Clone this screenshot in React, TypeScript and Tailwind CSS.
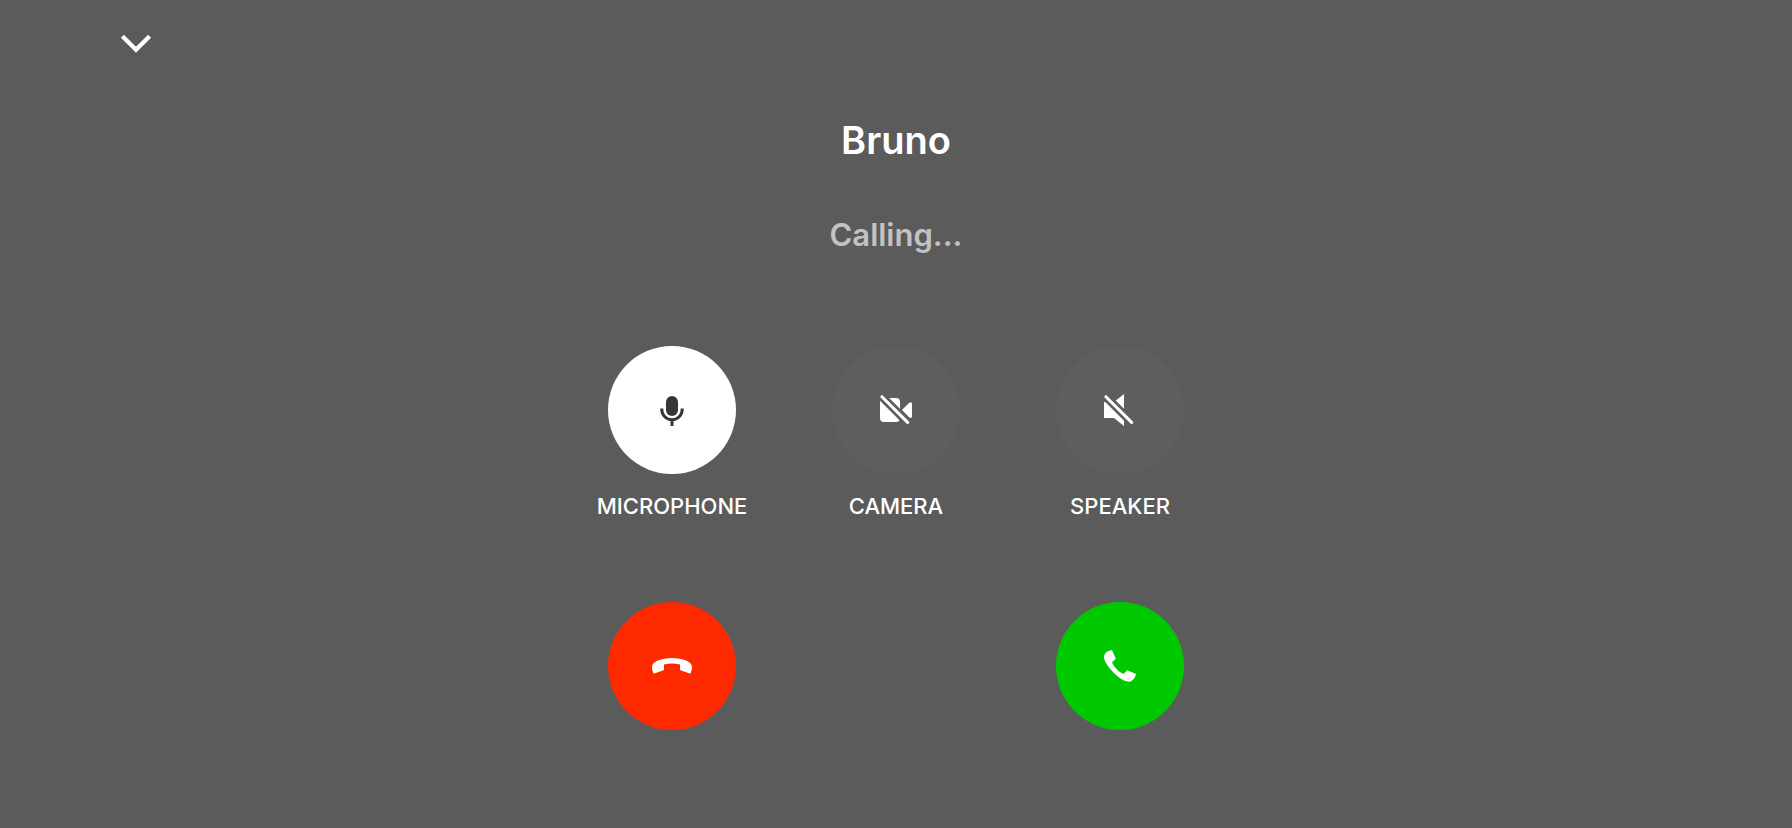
import type { ReactNode } from "react";

function ChevronDownIcon() {
  return (
    <svg className="h-8 w-8" viewBox="0 0 32 32" fill="none" stroke="currentColor" strokeWidth="4.2" aria-hidden="true">
      <path d="M2.4 8.2 16 21.8 29.6 8.2" />
    </svg>
  );
}

function MicrophoneIcon() {
  return (
    <svg className="h-8 w-8" viewBox="0 0 32 32" fill="none" aria-hidden="true">
      <rect x="10" y="2" width="12" height="20" rx="6" fill="currentColor" />
      <path d="M5.8 14.5v1a10.2 10.2 0 0 0 20.4 0v-1M16 26v6" stroke="currentColor" strokeWidth="3" />
    </svg>
  );
}

function CameraOffIcon() {
  return (
    <svg className="h-8 w-8" viewBox="0 0 32 32" fill="currentColor" aria-hidden="true">
      <mask id="camera-cut" maskUnits="userSpaceOnUse" x="0" y="0" width="32" height="32">
        <rect width="32" height="32" fill="white" />
        <path d="M-6-5.2 38 38.8" stroke="black" strokeWidth="8.4" />
      </mask>
      <g mask="url(#camera-cut)">
        <path d="M0 4h16a4 4 0 0 1 4 4v16a4 4 0 0 1-4 4H4a4 4 0 0 1-4-4z" />
        <path d="M22 16l7.2-7.2c1-1 2.8-.6 2.8 1v12.4c0 1.6-1.8 2-2.8 1z" />
      </g>
      <path d="M1.9 2.7 27.6 28.4" stroke="currentColor" strokeWidth="3" strokeLinecap="round" />
    </svg>
  );
}

function SpeakerOffIcon() {
  return (
    <svg className="h-8 w-8" viewBox="0 0 32 32" fill="currentColor" aria-hidden="true">
      <mask id="speaker-cut" maskUnits="userSpaceOnUse" x="0" y="0" width="32" height="32">
        <rect width="32" height="32" fill="white" />
        <path d="M-6-5.2 38 38.8" stroke="black" strokeWidth="8.4" />
      </mask>
      <path mask="url(#speaker-cut)" d="M0 8h10l10-8v32l-10-8H0z" />
      <path d="M1.9 2.7 27.6 28.4" stroke="currentColor" strokeWidth="3" strokeLinecap="round" />
    </svg>
  );
}

function HangUpIcon() {
  return (
    <svg className="h-4 w-10" viewBox="0 0 40 16" fill="currentColor" aria-hidden="true">
      <path d="M20 0C31 0 40 3.6 40 8.8c0 2.6-.6 4.7-1.7 6.9L28 12V6.6C23 5.2 17 5.2 12 6.6V12L1.7 15.7C.6 13.5 0 11.4 0 8.8 0 3.6 9 0 20 0z" />
    </svg>
  );
}

function PickUpIcon() {
  return (
    <svg className="h-8 w-8" viewBox="0 0 32 32" fill="currentColor" aria-hidden="true">
      <path d="M8 0l3.8 8.7L8 12.2c1.8 4.6 6.6 9.8 11.6 11.7l3.7-3.7L32 24c-.9 3.4-2.6 6-5 7.3-2.7 1.3-8.2-.2-14.5-6S-.1 11.7 0 7.2C.1 3.3 3 .8 8 0z" />
    </svg>
  );
}

function Toggle({ label, className, children }: { label: string; className: string; children: ReactNode }) {
  return (
    <button type="button" className="flex flex-col items-center gap-4">
      <span className={`flex size-32 items-center justify-center rounded-full ${className}`}>{children}</span>
      <span className="text-[22px] leading-8 font-medium">{label}</span>
    </button>
  );
}

export default function App() {
  return (
    <div className="min-h-screen bg-[#5b5b5b] font-['Inter',sans-serif] text-white">
      <header className="flex px-30 pt-7">
        <button type="button" aria-label="Minimize call">
          <ChevronDownIcon />
        </button>
      </header>
      <main className="flex flex-col items-center pt-14 pb-20">
        <h1 className="text-[38px] leading-12 font-semibold">Bruno</h1>
        <p className="mt-[51px] text-[31px] leading-10 font-semibold text-[#c2c2c2]">Calling...</p>
        <section aria-label="Call controls" className="mt-[91px] grid grid-cols-[repeat(3,224px)] justify-items-center gap-y-20">
          <Toggle label="MICROPHONE" className="bg-white text-[#33373a]">
            <MicrophoneIcon />
          </Toggle>
          <Toggle label="CAMERA" className="bg-[#5e5e5e]">
            <CameraOffIcon />
          </Toggle>
          <Toggle label="SPEAKER" className="bg-[#5e5e5e]">
            <SpeakerOffIcon />
          </Toggle>
          <button
            type="button"
            aria-label="Hang up"
            className="flex size-32 items-center justify-center rounded-full bg-[#ff2900]"
          >
            <HangUpIcon />
          </button>
          <button
            type="button"
            aria-label="Accept call"
            className="col-start-3 flex size-32 items-center justify-center rounded-full bg-[#00c800]"
          >
            <PickUpIcon />
          </button>
        </section>
      </main>
    </div>
  );
}
